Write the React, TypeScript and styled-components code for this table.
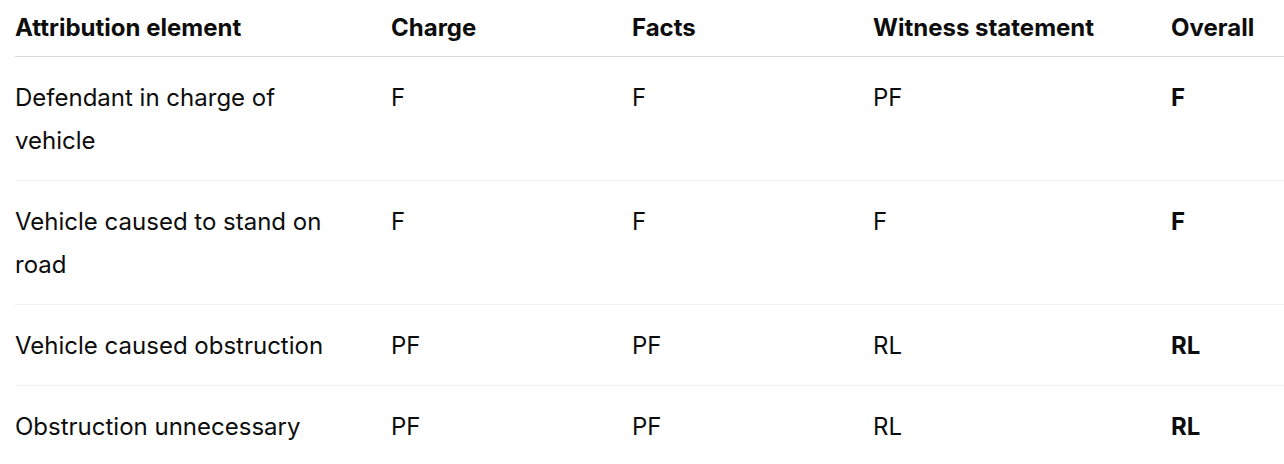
import React from 'react';
import styled, { createGlobalStyle } from 'styled-components';

const GlobalStyle = createGlobalStyle`
  html, body {
    margin: 0;
    padding: 0;
    background: #ffffff;
    overflow: hidden;
  }
  body {
    font-family: Inter, "Noto Sans", "Liberation Sans", sans-serif;
    color: #0d0d0d;
    -webkit-font-smoothing: antialiased;
  }
`;

const Wrapper = styled.div`
  padding: 0 0 0 15px;
`;

const Table = styled.table`
  border-collapse: collapse;
  width: 1269px;
  table-layout: fixed;
  font-size: 24px;
  line-height: 43px;

  th,
  td {
    box-sizing: border-box;
  }
`;

const HeadCell = styled.th<{ w: number }>`
  width: ${props => props.w}px;
  text-align: left;
  font-weight: 700;
  padding: 6px 40px 7px 0;
  border-bottom: 1px solid #d9d9d9;
  vertical-align: top;
  white-space: nowrap;
`;

const Row = styled.tr`
  border-bottom: 1px solid #f0f0f0;
`;

const Cell = styled.td<{ strong?: boolean }>`
  padding: 19px 40px 18px 0;
  vertical-align: top;
  font-weight: ${props => (props.strong ? 700 : 400)};
`;

const columns = [
  { label: 'Attribution element', w: 376 },
  { label: 'Charge', w: 241 },
  { label: 'Facts', w: 241 },
  { label: 'Witness statement', w: 298 },
  { label: 'Overall', w: 113 },
];

const rows = [
  ['Defendant in charge of vehicle', 'F', 'F', 'PF', 'F'],
  ['Vehicle caused to stand on road', 'F', 'F', 'F', 'F'],
  ['Vehicle caused obstruction', 'PF', 'PF', 'RL', 'RL'],
  ['Obstruction unnecessary', 'PF', 'PF', 'RL', 'RL'],
];

export default function App() {
  return (
    <>
      <GlobalStyle />
      <Wrapper>
        <Table>
          <thead>
            <tr>
              {columns.map(col => (
                <HeadCell key={col.label} w={col.w}>
                  {col.label}
                </HeadCell>
              ))}
            </tr>
          </thead>
          <tbody>
            {rows.map(row => (
              <Row key={row[0]}>
                {row.map((value, i) => (
                  <Cell key={i} strong={i === row.length - 1}>
                    {value}
                  </Cell>
                ))}
              </Row>
            ))}
          </tbody>
        </Table>
      </Wrapper>
    </>
  );
}
